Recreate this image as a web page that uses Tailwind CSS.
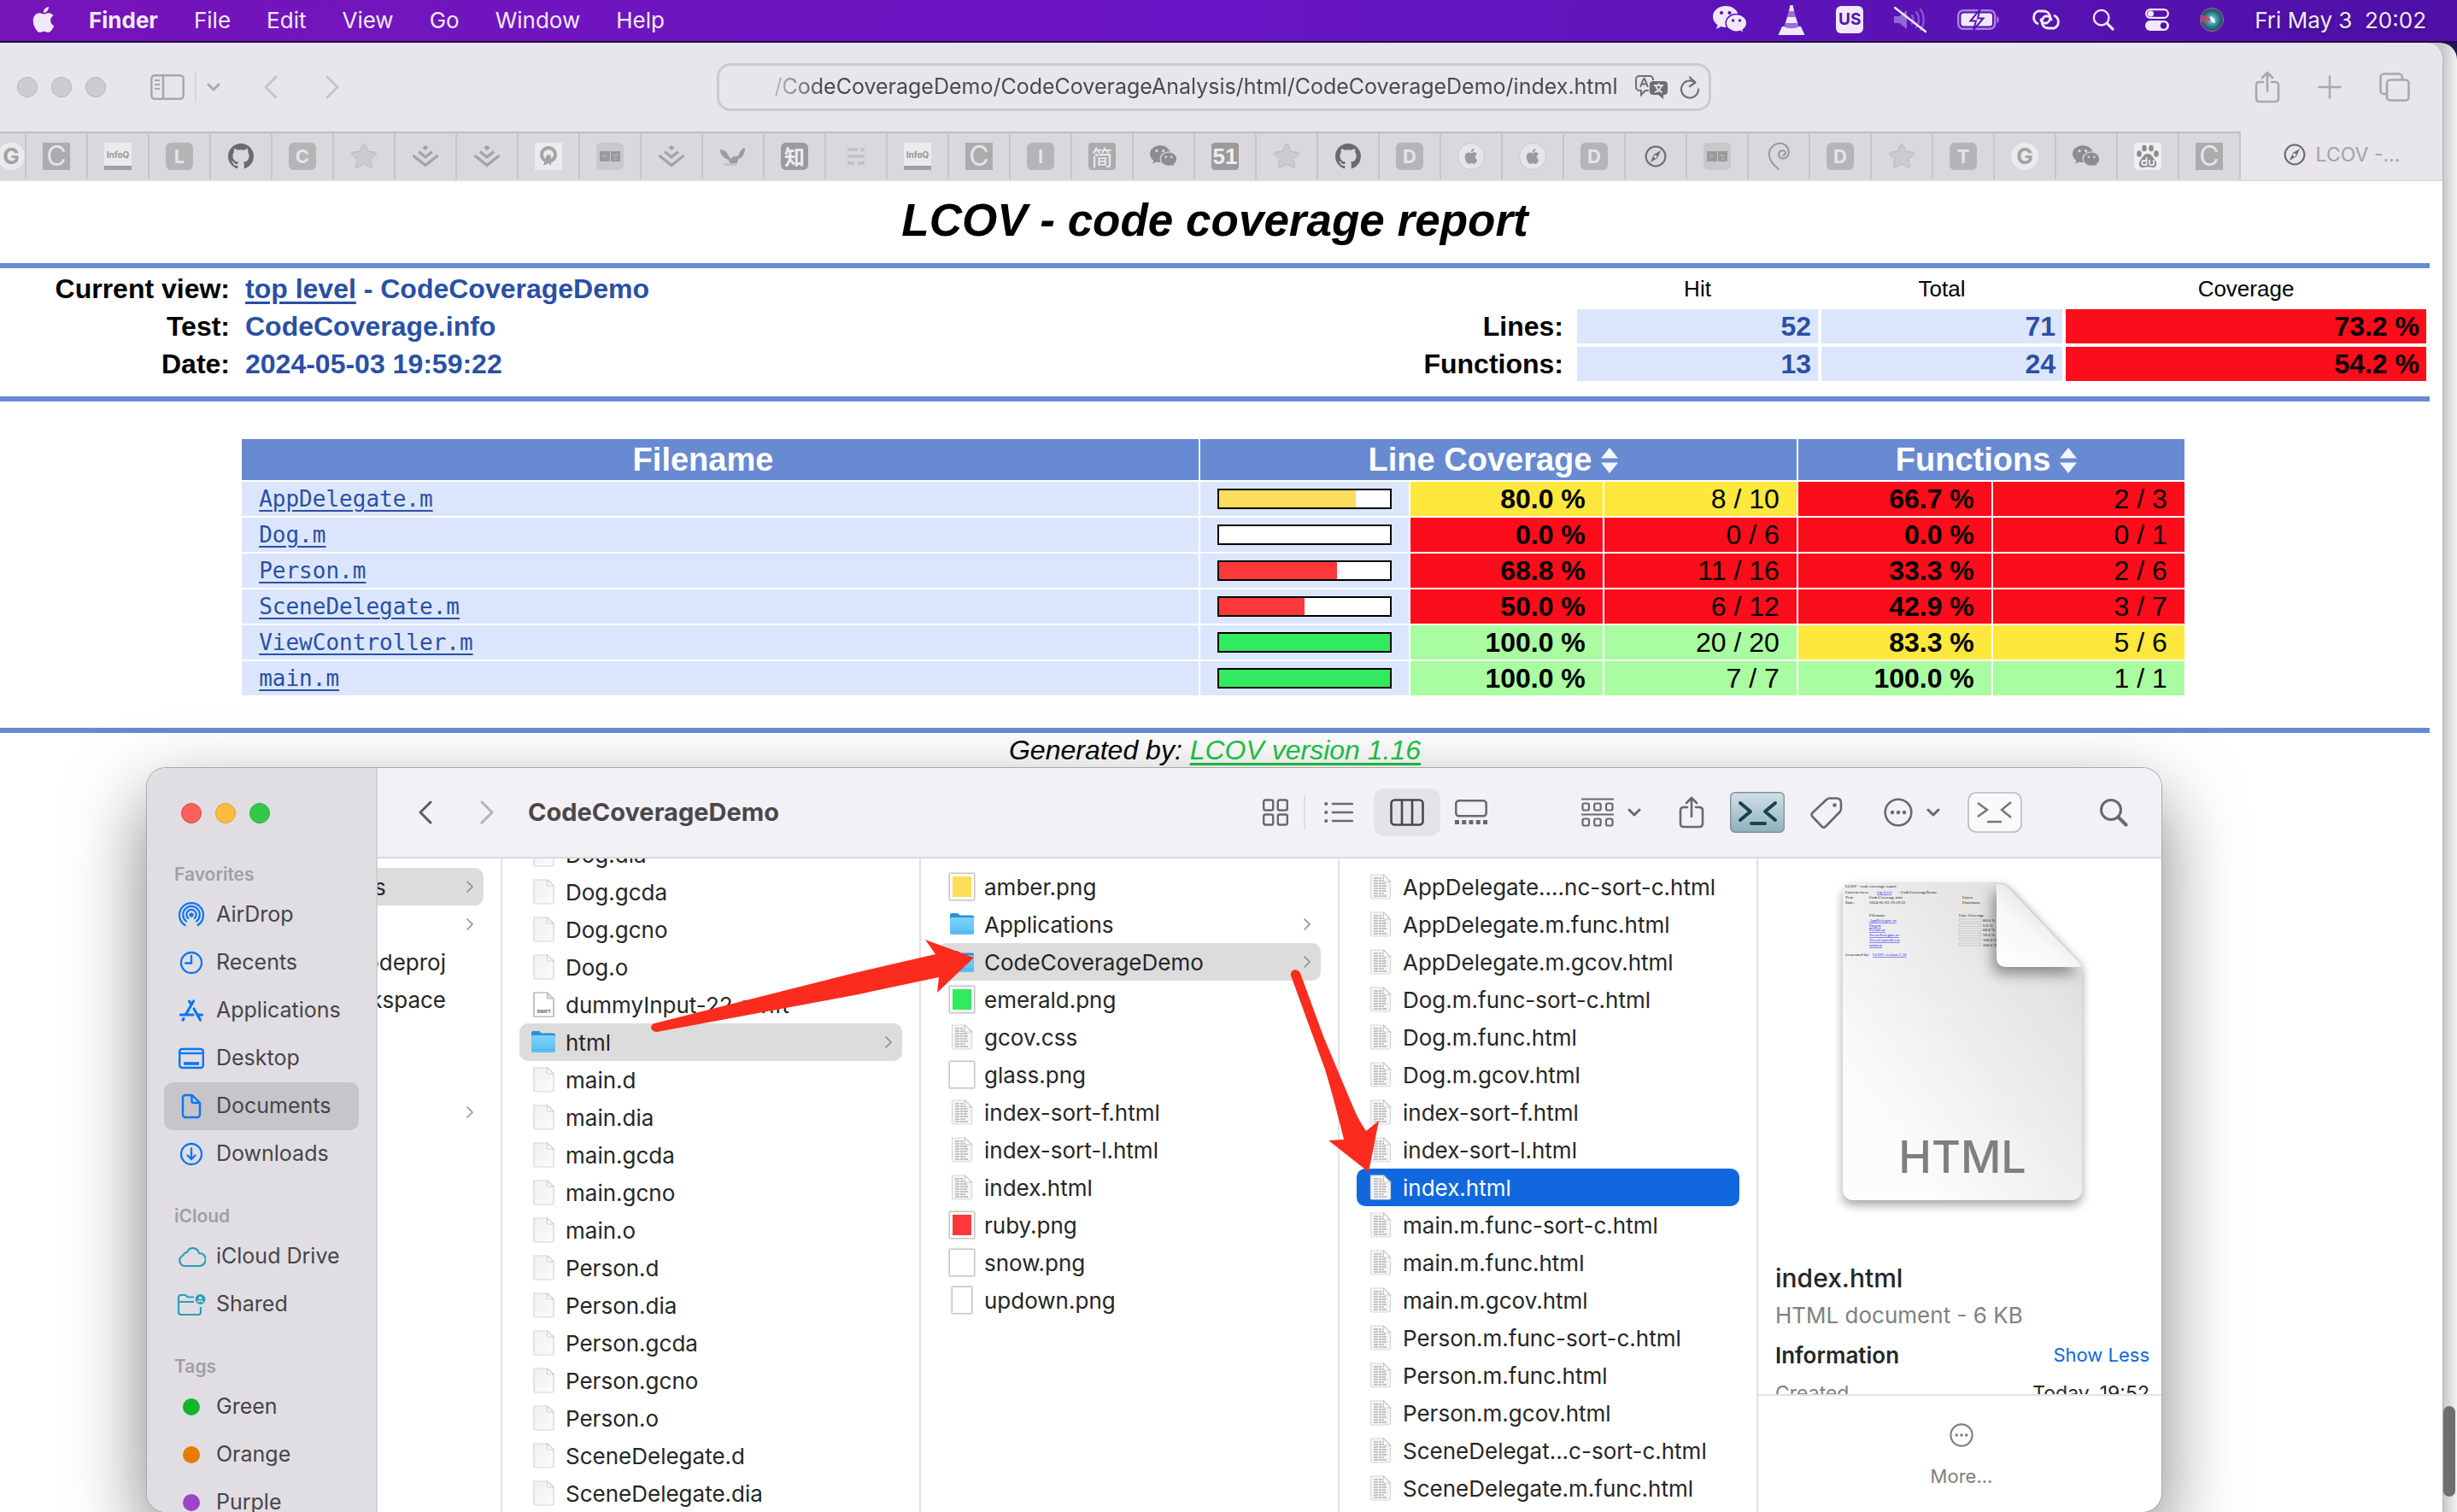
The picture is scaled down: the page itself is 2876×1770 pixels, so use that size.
<!DOCTYPE html>
<html lang="en">
<head>
<meta charset="utf-8">
<title>LCOV - code coverage report</title>
<script src="https://cdn.jsdelivr.net/npm/@tailwindcss/browser@4"></script>
</head>
<body class="relative h-screen overflow-hidden bg-[#24135c] font-['Inter',sans-serif] text-[26px] text-[#262626]">

<!-- Shared symbols -->
<svg class="absolute size-0" aria-hidden="true">
  <defs>
    <linearGradient id="paper" x1="0" y1="0" x2="1" y2="1"><stop offset="0" stop-color="#f0f0f0"/><stop offset="1" stop-color="#fbfbfb"/></linearGradient>
    <linearGradient id="folderFill" x1="0" y1="0" x2="0" y2="1"><stop offset="0" stop-color="#7ad3fb"/><stop offset="1" stop-color="#5bbdf0"/></linearGradient>
    <linearGradient id="sheet" x1="1" y1="0" x2="0" y2="1"><stop offset="0" stop-color="#dadada"/><stop offset=".35" stop-color="#e8e8e8"/><stop offset=".8" stop-color="#fcfcfc"/></linearGradient>
    <linearGradient id="curl" x1="0" y1="1" x2=".6" y2=".3"><stop offset="0" stop-color="#ffffff"/><stop offset=".6" stop-color="#f8f8f8"/><stop offset="1" stop-color="#e6e6e6"/></linearGradient>
    <linearGradient id="steel" x1="0" y1="0" x2="0" y2="1"><stop offset="0" stop-color="#d3e0e6"/><stop offset="1" stop-color="#8fb0bd"/></linearGradient>
    <radialGradient id="siri"><stop offset="0" stop-color="#d8f4fb"/><stop offset=".3" stop-color="#4fb5cc"/><stop offset=".7" stop-color="#27707c"/><stop offset="1" stop-color="#3a3558"/></radialGradient>
  </defs>
  <symbol id="apple" viewBox="0 0 24 24"><path fill="currentColor" d="M12.152 6.896c-.948 0-2.415-1.078-3.96-1.04-2.04.027-3.91 1.183-4.961 3.014-2.117 3.675-.546 9.103 1.519 12.09 1.013 1.454 2.208 3.09 3.792 3.039 1.52-.065 2.09-.987 3.935-.987 1.831 0 2.35.987 3.96.948 1.637-.026 2.676-1.48 3.676-2.948 1.156-1.688 1.636-3.325 1.662-3.415-.039-.013-3.182-1.221-3.22-4.857-.026-3.04 2.48-4.494 2.597-4.559-1.429-2.09-3.623-2.324-4.39-2.376-2-.156-3.675 1.09-4.61 1.09zM15.53 3.83c.843-1.012 1.4-2.427 1.245-3.83-1.207.052-2.662.805-3.532 1.818-.78.896-1.454 2.338-1.273 3.714 1.338.104 2.715-.688 3.559-1.701"/></symbol>
  <symbol id="github" viewBox="0 0 16 16"><path fill="currentColor" d="M8 0C3.58 0 0 3.58 0 8c0 3.54 2.29 6.53 5.47 7.59.4.07.55-.17.55-.38 0-.19-.01-.82-.01-1.49-2.01.37-2.53-.49-2.69-.94-.09-.23-.48-.94-.82-1.13-.28-.15-.68-.52-.01-.53.63-.01 1.08.58 1.23.82.72 1.21 1.87.87 2.33.66.07-.52.28-.87.51-1.07-1.78-.2-3.64-.89-3.64-3.95 0-.87.31-1.59.82-2.15-.08-.2-.36-1.02.08-2.12 0 0 .67-.21 2.2.82.64-.18 1.32-.27 2-.27s1.36.09 2 .27c1.53-1.04 2.2-.82 2.2-.82.44 1.1.16 1.92.08 2.12.51.56.82 1.27.82 2.15 0 3.07-1.87 3.75-3.65 3.95.29.25.54.73.54 1.48 0 1.07-.01 1.93-.01 2.2 0 .21.15.46.55.38A8.01 8.01 0 0 0 16 8c0-4.42-3.58-8-8-8"/></symbol>
  <symbol id="wechat" viewBox="0 0 40 32"><path fill="currentColor" d="M15 0C6.500 0 0 5.500 0 12.500c0 4 2.200 7.500 5.500 9.800L4 27l5.500-3c1.700.6 3.500.9 5.500.9 8.500 0 15-5.500 15-12.400S23.500 0 15 0z"/><circle cx="10" cy="8" r="2.100" fill="var(--cut)"/><circle cx="19.500" cy="8" r="2.100" fill="var(--cut)"/><path fill="currentColor" stroke="var(--cut)" stroke-width="1.600" d="M27.500 9.500c-7 0-12.300 4.600-12.300 10.400s5.300 10.300 12.300 10.300c1.600 0 3-.2 4.300-.7l4.700 2.500-1.200-4.100c2.700-1.900 4.500-4.800 4.500-8 0-5.800-5.300-10.400-12.300-10.400z"/><circle cx="23.500" cy="17" r="1.700" fill="var(--cut)"/><circle cx="31.500" cy="17" r="1.700" fill="var(--cut)"/></symbol>
  <symbol id="star" viewBox="0 0 32 32"><path fill="#cbcacd" stroke="#b9b8bb" stroke-linejoin="round" d="M16 1.500c1 0 1.500.8 1.800 1.600l3 7.400 8 .6c1.800.1 2.300 1.900 1 3l-6.100 5.200 1.900 8c.4 1.700-1.100 2.700-2.600 1.800L16 24.800l-7 4.300c-1.500.9-3-.1-2.600-1.800l1.900-8-6.100-5.200c-1.300-1.100-.8-2.900 1-3l8-.6 3-7.400c.3-.8.8-1.600 1.800-1.600z"/></symbol>
  <symbol id="juejin" viewBox="0 0 32 32"><g fill="none" stroke="#a3a2a5" stroke-width="3.200"><path d="M1.500 15 16 26.500 30.500 15M8 10.500l8 6.500 8-6.500"/></g><path fill="#a3a2a5" d="m16 3 3.700 3-3.700 3-3.700-3z"/></symbol>
  <symbol id="compass" viewBox="0 0 28 28"><circle cx="14" cy="14" r="12.300" fill="none" stroke="#6b6a6d" stroke-width="2.200"/><path fill="#6b6a6d" fill-rule="evenodd" d="m20.500 6.500-4.300 9.700L7.500 21.500l4.200-9.700zM12.600 12.700a2 2 0 1 0 2.800 2.700 2 2 0 0 0-2.800-2.700z"/></symbol>
  <symbol id="pixels" viewBox="0 0 32 32"><rect width="32" height="32" rx="5" fill="#c9c8cb"/><path fill="#9a999c" d="M4 10h12v12H4zM17 10h11v12H17z"/><path fill="#b0afb2" d="M8 14h3v3H8zM20 14h5v2h-5zM21 18h3v2h-3z"/></symbol>
  <symbol id="chev" viewBox="0 0 8 14"><path d="m1 1 6 6-6 6" fill="none" stroke="currentColor" stroke-width="1.500" stroke-linecap="round" stroke-linejoin="round"/></symbol>
  <symbol id="down" viewBox="0 0 16 10"><path d="m2 2 6 6 6-6" fill="none" stroke="currentColor" stroke-width="3" stroke-linecap="round" stroke-linejoin="round"/></symbol>
  <symbol id="share" viewBox="0 0 30 38"><path d="M10 13H5.500A3.500 3.500 0 0 0 2 16.500v16A3.500 3.500 0 0 0 5.500 36h19a3.500 3.500 0 0 0 3.500-3.500v-16a3.500 3.500 0 0 0-3.500-3.500H20M15 24V2.500M9 8l6-6 6 6" fill="none" stroke="currentColor" stroke-width="2.600" stroke-linecap="round" stroke-linejoin="round"/></symbol>
  <symbol id="search" viewBox="0 0 34 34"><circle cx="14" cy="14" r="11.500" fill="none" stroke="currentColor" stroke-width="3"/><path d="m22.500 22.500 9 9" stroke="currentColor" stroke-width="4" stroke-linecap="round"/></symbol>
  <symbol id="dots" viewBox="0 0 34 34"><circle cx="17" cy="17" r="15.300" fill="none" stroke="currentColor" stroke-width="2.600"/><g fill="currentColor"><circle cx="10" cy="17" r="2.200"/><circle cx="17" cy="17" r="2.200"/><circle cx="24" cy="17" r="2.200"/></g></symbol>
  <symbol id="doc" viewBox="0 0 28 30"><path fill="url(#paper)" stroke="#d5d5d5" stroke-width="1.200" d="M3 1h15.500L26 8v19.500a1.500 1.500 0 0 1-1.500 1.500h-20A1.500 1.500 0 0 1 3 27.500z"/><path fill="#fff" stroke="#cfcfcf" stroke-width="1.200" d="M18.500 1v5.500c0 .9.600 1.500 1.500 1.500h6z"/></symbol>
  <symbol id="txt" viewBox="0 0 28 30"><path fill="#f5f5f5" stroke="#d8d8d8" stroke-width="1.200" d="M2.500 1h15l8 8v18.500a1.500 1.500 0 0 1-1.500 1.500H4a1.500 1.500 0 0 1-1.500-1.500z"/><path d="M6 5h10M6 8h11M6 11h14M6 14h15M6 17h14M6 20h15M6 23h12M6 26h15" fill="none" stroke="#b4b4b4" stroke-width="1.700" stroke-dasharray="5 1 3 .5 6 1"/><path fill="#fff" stroke="#c9c9c9" stroke-width="1.200" d="M17.500 1v6.500c0 .9.600 1.500 1.500 1.500h6.500z"/></symbol>
  <symbol id="folder" viewBox="0 0 28 28"><path fill="#2e8fce" d="M0 3a2 2 0 0 1 2-2h7l3 2.500h14a2 2 0 0 1 2 2V12H0z"/><path fill="url(#folderFill)" d="M0 8a2 2 0 0 1 2-2h24a2 2 0 0 1 2 2v16a2 2 0 0 1-2 2H2a2 2 0 0 1-2-2z"/><path stroke="#48aee6" d="M0 22.500h28"/></symbol>
  <symbol id="sort" viewBox="0 0 20 30"><path fill="#f3f6fd" d="M10 0l10 12.500H0zM10 30 0 17.500h20z"/></symbol>
</svg>

<!-- Menu bar -->
<header class="flex h-[50px] items-center justify-between border-b-2 border-[#1d0849] bg-linear-to-r from-[#7514b9] via-[#6915c5] to-[#4e10a8] pr-9 pb-0.5 pl-9 text-[#f1e9f9] [text-shadow:0_3px_5px_rgb(0_0_0/.3)]">
  <nav class="flex items-center gap-[42px]">
    <button aria-label="Apple menu"><svg class="h-8 w-[30px]"><use href="#apple"/></svg></button>
    <button class="-ml-1 font-bold">Finder</button>
    <button>File</button><button>Edit</button><button>View</button><button>Go</button><button>Window</button><button>Help</button>
  </nav>
  <div class="flex items-center gap-9 [--cut:#5c13bb]">
    <svg class="h-8 w-10"><use href="#wechat"/></svg>
    <svg class="h-9 w-8" viewBox="0 0 32 36"><path fill="#f1e9f9" d="M14.500 1h3l1.600 7h-6.200zM11 15h10l2.500 8h-15zM5 26h22l4.500 10H.5z"/><path fill="#9a6fd6" d="M12.800 8h6.400l2 7H10.800zM8.500 22h15l1 4c-3 3-14 3-17 0z"/></svg>
    <span class="grid size-8 place-items-center rounded-md bg-[#f1e9f9] text-[19px] font-bold text-[#5a12b4] [text-shadow:none]">US</span>
    <svg class="h-8 w-[38px]" viewBox="0 0 38 32" fill="none"><path fill="#9266d2" d="M0 12h6l9-7v22l-9-7H0z"/><path stroke="#8654cc" stroke-width="2.500" stroke-linecap="round" d="M21 11c2 3 2 7 0 10M26 7c4 5 4 13 0 18M31 4c5 7 5 17 0 24"/><path stroke="#f1e9f9" stroke-width="2.500" stroke-linecap="round" d="M1 2l36 28"/></svg>
    <svg class="h-6 w-[50px]" viewBox="0 0 50 24"><rect x="1.200" y="1.200" width="43" height="21.600" rx="6" fill="none" stroke="#a884dc" stroke-width="2.400"/><path fill="#a884dc" d="M46.500 8c3 1 3 7 0 8z"/><rect x="4.500" y="4.500" width="36.500" height="15" rx="3" fill="#f1e9f9"/><path fill="#f1e9f9" stroke="#5a12b4" stroke-width="2" d="M26.500 0 15.500 13.500h6.500L19 24l11.500-13.500H24z"/></svg>
    <svg class="h-6 w-9" viewBox="0 0 36 24" fill="none" stroke="#f1e9f9" stroke-width="2.800" stroke-linecap="round"><path d="M8 16.500A8 8 0 0 1 8.500 2H15a7.500 7.500 0 0 1 4 14H16a4 4 0 0 1-4-4"/><path d="M28 7.500A8 8 0 0 1 27.500 22H20a7.500 7.500 0 0 1-3-14h3a4 4 0 0 1 4 4"/></svg>
    <svg class="size-[26px]"><use href="#search"/></svg>
    <svg class="h-[26px] w-7" viewBox="0 0 28 26"><rect x="1.200" y="1.200" width="25.600" height="9.600" rx="4.800" fill="none" stroke="#f1e9f9" stroke-width="2.200"/><circle cx="6.500" cy="6" r="3.500" fill="#f1e9f9"/><rect y="14" width="28" height="12" rx="6" fill="#f1e9f9"/><circle cx="21.500" cy="20" r="3.700" fill="#4e10a8"/></svg>
    <svg class="size-7" viewBox="0 0 28 28"><circle cx="14" cy="14" r="13.500" fill="url(#siri)" stroke="#8a7fa8"/><path fill="#d43c6b" opacity=".8" d="M2 9c5 0 9 2 11 5-3 4-8 5-12 1z"/><path fill="#fff" opacity=".9" d="M12 10c4 1 6 4 6 8-4 0-6-3-6-8z"/></svg>
    <time class="whitespace-pre">Fri May 3  20:02</time>
  </div>
</header>

<!-- Window behind the browser, seen along the right edge -->
<div class="absolute top-[50px] right-0 bottom-0 w-16 rounded-tr-[20px] bg-linear-to-r from-[#c9c9c9] from-75% to-[#f3f3f3]">
  <div class="absolute right-0.5 bottom-[18px] h-[106px] w-3.5 rounded-full bg-[#6f6f6f]"></div>
</div>

<!-- Browser window -->
<main class="absolute top-[50px] right-4 bottom-0 left-0 overflow-hidden rounded-tr-[20px] border-r border-[#b5b5b5] bg-white">
  <div class="flex h-[104px] items-center justify-between bg-[#e8e6eb] pr-[38px] pl-5 text-[#a9a8ac]">
    <div class="flex flex-1 items-center">
      <div class="flex gap-4"><i class="size-6 rounded-full border border-[#b5b4b9] bg-[#cdccd1]"></i><i class="size-6 rounded-full border border-[#b5b4b9] bg-[#cdccd1]"></i><i class="size-6 rounded-full border border-[#b5b4b9] bg-[#cdccd1]"></i></div>
      <button class="ml-[52px]" aria-label="Sidebar"><svg class="h-[30px] w-10" viewBox="0 0 40 30" fill="none" stroke="currentColor" stroke-width="2.500"><rect x="1.300" y="1.300" width="37.400" height="27.400" rx="4"/><path d="M15 1v28"/><path stroke-width="2" d="M5 7h6M5 12h6M5 17h6"/></svg></button>
      <span class="ml-3 h-9 w-0.5 bg-[#d6d5da]"></span>
      <button class="ml-3" aria-label="Sidebar options"><svg class="h-2.5 w-4"><use href="#down"/></svg></button>
      <button class="ml-[51px] text-[#c6c5ca]" aria-label="Back"><svg class="h-7 w-4 rotate-180"><use href="#chev"/></svg></button>
      <button class="ml-14 text-[#c6c5ca]" aria-label="Forward"><svg class="h-7 w-4"><use href="#chev"/></svg></button>
    </div>
    <div class="flex h-14 w-[1164px] items-center rounded-2xl border-[3px] border-[#cbcace] pr-2.5 pl-[42px] text-[#6f6e72]">
      <input aria-label="Address" class="min-w-0 flex-1 bg-transparent text-right text-[25px] text-[#4b4a4d] [mask-image:linear-gradient(to_right,transparent,black_80px)]" value="/CodeCoverageDemo/CodeCoverageAnalysis/html/CodeCoverageDemo/index.html">
      <svg class="ml-5 h-7 w-[38px]" viewBox="0 0 38 28"><path fill="none" stroke="currentColor" stroke-width="2" d="M16 18h-4l-5 5v-5H5a4 4 0 0 1-4-4V5a4 4 0 0 1 4-4h12a4 4 0 0 1 4 4v1"/><path fill="none" stroke="currentColor" stroke-width="2" d="m6 14 4-10h1l4 10M8 10.500h5"/><path fill="currentColor" d="M21 7h13a4 4 0 0 1 4 4v8a4 4 0 0 1-4 4h-1v5l-6-5h-6a4 4 0 0 1-4-4v-8a4 4 0 0 1 4-4z"/><path fill="none" stroke="#e8e6eb" stroke-width="1.800" d="M22 12h11M27.500 9.500V12M31 12c-1 4-4 7-8 8M24 12c1 4 4 7 8 8"/></svg>
      <svg class="ml-3.5 h-[27px] w-6" viewBox="0 0 24 27" fill="none" stroke="currentColor" stroke-width="2.200" stroke-linecap="round" stroke-linejoin="round"><path d="M18 7.500A10 10 0 1 0 22 15.500M12 1.500l6.500 6-6.500 4.500"/></svg>
    </div>
    <div class="flex flex-1 items-center justify-end">
      <button aria-label="Share"><svg class="h-[38px] w-[30px]"><use href="#share"/></svg></button>
      <button class="ml-11" aria-label="New tab"><svg class="size-7" viewBox="0 0 28 28" stroke="currentColor" stroke-width="2.500" stroke-linecap="round"><path d="M14 1.500v25M1.500 14h25"/></svg></button>
      <button class="ml-11" aria-label="Tab overview"><svg class="h-[34px] w-9" viewBox="0 0 36 34" fill="none" stroke="currentColor" stroke-width="2.600"><rect x="9" y="8.500" width="25.500" height="24" rx="4"/><path d="M9 25H5.500a4 4 0 0 1-4-4V5.500a4 4 0 0 1 4-4H23a4 4 0 0 1 4 4v3"/></svg></button>
    </div>
  </div>

  <!-- Tab strip -->
  <div class="flex h-[58px] border-b-2 border-[#dcdbdf] bg-[#dad8dd] [--cut:#dad8dd] [&>button]:grid [&>button]:w-[72px] [&>button]:shrink-0 [&>button]:place-items-center [&>button]:border-t-2 [&>button]:border-r-2 [&>button]:border-t-[#bcbbc0] [&>button]:border-r-[#c6c5ca] [&_span]:grid [&_span]:size-8 [&_span]:place-items-center [&_span]:leading-none [&_svg]:size-8">
    <div class="flex w-[31px] items-center justify-end overflow-hidden border-t-2 border-r-2 border-t-[#bcbbc0] border-r-[#c6c5ca]"><span class="shrink-0 rounded-full bg-[#ebeaed] text-[26px] font-bold text-[#a3a2a5]">G</span></div>
    <button><span class="bg-[#acabad] text-[32px] text-[#e6e5e8]">C</span></button>
    <button><span class="border-b-[5px] border-[#a09fa2] bg-[#ebeaed] text-[10px] font-bold text-[#98979a]">InfoQ</span></button>
    <button><span class="rounded-md bg-[#b5b4b6] text-[22px] font-bold text-[#e6e5e8]">L</span></button>
    <button class="text-[#6b6a6d]" aria-label="GitHub"><svg class="p-px"><use href="#github"/></svg></button>
    <button><span class="rounded-md bg-[#b5b4b6] text-[22px] font-bold text-[#e6e5e8]">C</span></button>
    <button aria-label="Tab"><svg><use href="#star"/></svg></button>
    <button aria-label="Tab"><svg><use href="#juejin"/></svg></button>
    <button aria-label="Tab"><svg><use href="#juejin"/></svg></button>
    <button aria-label="Tab"><svg viewBox="0 0 32 32"><path fill="#ebeaed" d="M0 0h32v32H0z"/><circle cx="16" cy="14" r="8" fill="none" stroke="#a3a2a5" stroke-width="4"/><path fill="#a3a2a5" d="M13 17c0-4 6-4 6 0v10l-3-3-6 3z"/></svg></button>
    <button aria-label="Tab"><svg><use href="#pixels"/></svg></button>
    <button aria-label="Tab"><svg><use href="#juejin"/></svg></button>
    <button aria-label="Tab"><svg viewBox="0 0 32 32"><path fill="#8d8c8f" d="M1 8c4 0 8 2 10 8l2 3 4-3c3 0 5 0 6-2 1-4 3-7 7-8 0 6-2 12-8 13l-1 5c-5 3-9 2-10-4C5 18 1 14 1 8z" opacity=".8"/><path fill="#c5c4c7" d="M6 24h14v3H6z"/></svg></button>
    <button><span class="rounded-md bg-[#9b9a9d] font-['Noto_Sans_CJK_SC',sans-serif] text-[24px] font-bold text-[#efeef1]">知</span></button>
    <button aria-label="Tab"><svg viewBox="0 0 32 32" fill="#c2c1c4"><path d="M6 6h12v4H6zM21 6h5v4h-5zM6 14h20v4H6zM6 22h8v4H6zM18 22h8v4h-8z"/></svg></button>
    <button><span class="border-b-[5px] border-[#a09fa2] bg-[#ebeaed] text-[10px] font-bold text-[#98979a]">InfoQ</span></button>
    <button><span class="bg-[#acabad] text-[32px] text-[#e6e5e8]">C</span></button>
    <button><span class="rounded-md bg-[#b5b4b6] text-[22px] font-bold text-[#e6e5e8]">I</span></button>
    <button><span class="rounded-sm bg-[#acabad] font-['Noto_Sans_CJK_SC',sans-serif] text-[25px] text-[#efeef1]">简</span></button>
    <button class="text-[#8d8c8f]" aria-label="WeChat"><svg><use href="#wechat"/></svg></button>
    <button><span class="rounded-sm bg-[#9b9a9d] font-['Liberation_Sans',sans-serif] text-[26px] font-bold text-[#efeef1]">51</span></button>
    <button aria-label="Tab"><svg><use href="#star"/></svg></button>
    <button class="text-[#6b6a6d]" aria-label="GitHub"><svg class="p-px"><use href="#github"/></svg></button>
    <button><span class="rounded-md bg-[#b5b4b6] text-[22px] font-bold text-[#e6e5e8]">D</span></button>
    <button class="text-[#9b9a9d]" aria-label="Apple"><span class="rounded-full border border-[#c9c8cb] bg-[#e6e5e8] [&>svg]:size-[18px]"><svg><use href="#apple"/></svg></span></button>
    <button class="text-[#9b9a9d]" aria-label="Apple"><span class="rounded-full border border-[#c9c8cb] bg-[#e6e5e8] [&>svg]:size-[18px]"><svg><use href="#apple"/></svg></span></button>
    <button><span class="rounded-md bg-[#b5b4b6] text-[22px] font-bold text-[#e6e5e8]">D</span></button>
    <button aria-label="Tab"><svg class="p-[3px]"><use href="#compass"/></svg></button>
    <button aria-label="Tab"><svg><use href="#pixels"/></svg></button>
    <button aria-label="Tab"><svg viewBox="0 0 32 32" fill="none" stroke="#98979a" stroke-width="2" stroke-linecap="round"><path d="M16 31C8 25 4 18 5 11 7 3 14 0 20 1c7 2 9 9 7 14-3 5-10 5-11-1 0-4 4-6 7-4 2 2 0 5-2 5"/></svg></button>
    <button><span class="rounded-md bg-[#b5b4b6] text-[22px] font-bold text-[#e6e5e8]">D</span></button>
    <button aria-label="Tab"><svg><use href="#star"/></svg></button>
    <button><span class="rounded-md bg-[#b5b4b6] text-[22px] font-bold text-[#e6e5e8]">T</span></button>
    <button><span class="rounded-full bg-[#ebeaed] text-[26px] font-bold text-[#a3a2a5]">G</span></button>
    <button class="text-[#8d8c8f]" aria-label="WeChat"><svg><use href="#wechat"/></svg></button>
    <button aria-label="Baidu"><svg viewBox="0 0 32 32"><rect width="32" height="32" rx="5" fill="#efeef1"/><g fill="#8d8c8f"><ellipse cx="6" cy="13" rx="2.800" ry="3.700"/><ellipse cx="12" cy="6.500" rx="2.800" ry="3.800"/><ellipse cx="20" cy="6.500" rx="2.800" ry="3.800"/><ellipse cx="26" cy="13" rx="2.800" ry="3.700"/><path d="M16 13c5 0 6 5 9 8 3 5 0 9-4 8-3-1-7-1-10 0-4 1-7-3-4-8 3-3 4-8 9-8z"/></g><path fill="none" stroke="#efeef1" stroke-width="1.800" d="M14.500 17v9h-3c-3 0-3-5 0-5h3M18 20v4c0 3 4 3 5 1v-5 6"/></svg></button>
    <button><span class="bg-[#acabad] text-[32px] text-[#e6e5e8]">C</span></button>
    <div class="flex flex-1 items-center justify-center gap-3 bg-[#e8e6eb] pb-0.5 text-[23px] text-[#a3a2a5] [&>svg]:size-[26px]"><svg><use href="#compass"/></svg>LCOV -...</div>
  </div>

  <!-- Coverage report -->
  <article class="mr-[15px] font-['Liberation_Sans',Arial,sans-serif] text-[32px] leading-10 text-black">
    <h1 class="flex h-24 items-center justify-center pb-1 text-[53px] font-bold italic">LCOV - code coverage report</h1>
    <div class="flex items-start justify-between border-y-[6px] border-[#688ad2] pb-3.5 font-bold">
      <table class="border-separate border-spacing-1 text-left text-[#2a50a5] [&_td]:h-10 [&_td]:p-0 [&_td]:pl-0.5 [&_th]:w-[277px] [&_th]:p-0 [&_th]:pr-3 [&_th]:text-right [&_th]:text-black">
        <tr><th scope="row">Current view:</th><td><a href="#" class="underline underline-offset-4">top level</a> - CodeCoverageDemo</td></tr>
        <tr><th scope="row">Test:</th><td>CodeCoverage.info</td></tr>
        <tr><th scope="row">Date:</th><td>2024-05-03 19:59:22</td></tr>
      </table>
      <table class="border-separate border-spacing-1 text-right [&_td]:h-10 [&_td]:bg-[#dbe6fd] [&_td]:p-0 [&_td]:pr-2 [&_td]:text-[#2a50a5] [&_th]:h-10 [&_th]:p-0">
        <tr class="text-center text-[26px] [&>th]:font-normal"><td class="bg-transparent!"></td><th class="w-[282px]">Hit</th><th class="w-[282px]">Total</th><th class="w-[422px]">Coverage</th></tr>
        <tr><th scope="row" class="pr-3!">Lines:</th><td>52</td><td>71</td><td class="bg-[#fc0d1b]! text-black!">73.2 %</td></tr>
        <tr><th scope="row" class="pr-3!">Functions:</th><td>13</td><td>24</td><td class="bg-[#fc0d1b]! text-black!">54.2 %</td></tr>
      </table>
    </div>

    <div class="pt-[42px] pr-1">
    <table class="mx-auto w-[80.2%] table-fixed border-separate border-spacing-0.5 text-right [&_tbody_td]:h-10 [&_tbody_td]:p-0 [&_tbody_td]:pr-5 [&_tbody_td]:leading-9 [&_tbody_tr>td:first-child]:bg-[#dbe6fd] [&_tbody_tr>td:first-child]:pl-5 [&_tbody_tr>td:first-child]:text-left [&_tbody_tr>td:nth-child(2)]:bg-[#dbe6fd] [&_tbody_tr>td:nth-child(2)]:pl-5 [&_tbody_tr>td:nth-child(3)]:font-bold [&_tbody_tr>td:nth-child(5)]:font-bold [&_thead_th]:h-12 [&_thead_th]:bg-[#688ad2] [&_thead_th]:p-0 [&_thead_th]:pr-3 [&_thead_th]:text-center [&_thead_th]:text-[38px] [&_thead_th]:text-white [&_a]:block [&_a]:font-['DejaVu_Sans_Mono',monospace] [&_a]:text-[26px] [&_a]:text-[#2a50a5] [&_a]:underline [&_a]:underline-offset-4">
      <colgroup><col><col class="w-[244px]"><col class="w-[225px]"><col class="w-[225px]"><col class="w-[226px]"><col class="w-[224px]"></colgroup>
      <thead><tr><th class="pr-10!">Filename</th><th colspan="3">Line Coverage <svg class="inline h-[30px] w-5 align-[-3px]"><use href="#sort"/></svg></th><th colspan="2">Functions <svg class="inline h-[30px] w-5 align-[-3px]"><use href="#sort"/></svg></th></tr></thead>
      <tbody>
        <tr><td><a href="#">AppDelegate.m</a></td><td><div class="h-6 w-[204px] border-2 border-black bg-white"><div class="h-full bg-[#fddd5c]" style="width:80%"></div></div></td><td class="bg-[#fee83d]">80.0 %</td><td class="bg-[#fee83d]">8 / 10</td><td class="bg-[#fc0d1b]">66.7 %</td><td class="bg-[#fc0d1b]">2 / 3</td></tr>
        <tr><td><a href="#">Dog.m</a></td><td><div class="h-6 w-[204px] border-2 border-black bg-white"></div></td><td class="bg-[#fc0d1b]">0.0 %</td><td class="bg-[#fc0d1b]">0 / 6</td><td class="bg-[#fc0d1b]">0.0 %</td><td class="bg-[#fc0d1b]">0 / 1</td></tr>
        <tr><td><a href="#">Person.m</a></td><td><div class="h-6 w-[204px] border-2 border-black bg-white"><div class="h-full bg-[#fd383a]" style="width:69%"></div></div></td><td class="bg-[#fc0d1b]">68.8 %</td><td class="bg-[#fc0d1b]">11 / 16</td><td class="bg-[#fc0d1b]">33.3 %</td><td class="bg-[#fc0d1b]">2 / 6</td></tr>
        <tr><td><a href="#">SceneDelegate.m</a></td><td><div class="h-6 w-[204px] border-2 border-black bg-white"><div class="h-full bg-[#fd383a]" style="width:50%"></div></div></td><td class="bg-[#fc0d1b]">50.0 %</td><td class="bg-[#fc0d1b]">6 / 12</td><td class="bg-[#fc0d1b]">42.9 %</td><td class="bg-[#fc0d1b]">3 / 7</td></tr>
        <tr><td><a href="#">ViewController.m</a></td><td><div class="h-6 w-[204px] border-2 border-black bg-white"><div class="h-full bg-[#31ea5f]" style="width:100%"></div></div></td><td class="bg-[#aafca0]">100.0 %</td><td class="bg-[#aafca0]">20 / 20</td><td class="bg-[#fee83d]">83.3 %</td><td class="bg-[#fee83d]">5 / 6</td></tr>
        <tr><td><a href="#">main.m</a></td><td><div class="h-6 w-[204px] border-2 border-black bg-white"><div class="h-full bg-[#31ea5f]" style="width:100%"></div></div></td><td class="bg-[#aafca0]">100.0 %</td><td class="bg-[#aafca0]">7 / 7</td><td class="bg-[#aafca0]">100.0 %</td><td class="bg-[#aafca0]">1 / 1</td></tr>
      </tbody>
    </table>
    </div>
    <p class="mt-9 border-t-[6px] border-[#688ad2] text-center italic">Generated by: <a href="#" class="text-[#1fc546] underline underline-offset-4">LCOV version 1.16</a></p>
  </article>
</main>

<!-- Finder window -->
<section class="absolute top-[899px] right-[346px] bottom-0 left-[172px] flex overflow-hidden rounded-[22px] bg-white shadow-[0_0_0_1px_#a9a9ab,0_36px_90px_rgb(0_0_0/.5)]">
  <aside class="w-[270px] shrink-0 overflow-hidden border-r-2 border-[#d2d0d5] bg-[#e0dee3] px-5 text-[25px] text-[#464548] [&_h2]:mt-[26px] [&_h2]:h-[38px] [&_h2]:pl-3 [&_h2]:text-[21px] [&_h2]:leading-[38px] [&_h2]:font-semibold [&_h2]:text-[#a09fa3] [&_li]:flex [&_li]:h-14 [&_li]:items-center [&_li]:gap-3 [&_li]:rounded-[10px] [&_li]:pl-[15px] [&_li>svg]:h-8 [&_li>svg]:w-[34px] [&_li>svg]:shrink-0 [&_li]:whitespace-nowrap [&_i]:mx-[7px] [&_i]:size-5 [&_i]:rounded-full">
    <div class="flex h-[106px] items-center gap-4 pl-5"><b class="size-6 rounded-full border border-[#e2463f] bg-[#fc605c]"></b><b class="size-6 rounded-full border border-[#dfa032] bg-[#fdbc40]"></b><b class="size-6 rounded-full border border-[#2aac3c] bg-[#34c84a]"></b></div>
    <h2 class="mt-0!">Favorites</h2>
    <ul class="[&_svg]:text-[#0a76f8]">
      <li><svg viewBox="0 0 34 32" fill="none" stroke="currentColor" stroke-width="2.200" stroke-linecap="round"><path d="M9.500 28A14 14 0 1 1 24.500 28M11 23.500a9.800 9.800 0 1 1 12 0M13.300 20a5.700 5.700 0 1 1 7.400 0"/><circle cx="17" cy="16" r="1.500" fill="currentColor"/></svg>AirDrop</li>
      <li><svg viewBox="0 0 34 32" fill="none" stroke="currentColor" stroke-width="2.300" stroke-linecap="round"><circle cx="17" cy="16" r="12"/><path d="M17 8v8.500h-7"/></svg>Recents</li>
      <li><svg viewBox="0 0 34 32" fill="none" stroke="currentColor" stroke-width="3.200" stroke-linecap="round"><path d="M19.500 5 10.500 20.500M14.500 5l2.500 4M20 14l7.500 13M4.500 21H19M25 21h4.500M8 25.500 7 27"/></svg>Applications</li>
      <li><svg viewBox="0 0 34 32" fill="none" stroke="currentColor" stroke-width="2.400"><rect x="3.200" y="5" width="27.600" height="22" rx="3"/><path d="M3 10h28"/><path stroke-width="3.600" d="M8 22h18"/></svg>Desktop</li>
      <li class="bg-[#c7c5ca]"><svg viewBox="0 0 34 32" fill="none" stroke="currentColor" stroke-width="2.400" stroke-linejoin="round"><path d="M10 3h8l9 9v14a3 3 0 0 1-3 3H10a3 3 0 0 1-3-3V6a3 3 0 0 1 3-3zM17.500 3v7a2 2 0 0 0 2 2H27"/></svg>Documents</li>
      <li><svg viewBox="0 0 34 32" fill="none" stroke="currentColor" stroke-width="2.300" stroke-linecap="round"><circle cx="17" cy="16" r="12"/><path d="M17 9.500v12M12.500 17.500l4.500 4.500 4.500-4.500"/></svg>Downloads</li>
    </ul>
    <h2>iCloud</h2>
    <ul class="[&_svg]:text-[#2a9fba]">
      <li><svg viewBox="0 0 34 32" fill="none" stroke="currentColor" stroke-width="2.200"><path d="M9 27a6.500 6.500 0 0 1-1.500-12.500A5 5 0 0 1 12 11c2.500-7 12-6.500 14 1a7.500 7.500 0 0 1 .5 15z"/></svg>iCloud Drive</li>
      <li><svg viewBox="0 0 34 32" fill="none" stroke="currentColor" stroke-width="2.200"><path d="M28 19v6a3 3 0 0 1-3 3H5a3 3 0 0 1-3-3V8a3 3 0 0 1 3-3h5l3 2.500h7M2 13h18"/><circle cx="27.500" cy="10" r="6" fill="currentColor" stroke="none"/><circle cx="27.500" cy="8.500" r="1.800" fill="#e0dee3" stroke="none"/><path stroke="#e0dee3" stroke-width="1.600" d="M24 13.500c1-2 6-2 7 0"/></svg>Shared</li>
    </ul>
    <h2>Tags</h2>
    <ul>
      <li><i class="bg-[#12b52d]"></i>Green</li>
      <li><i class="bg-[#e87b00]"></i>Orange</li>
      <li><i class="bg-[#9b45c9]"></i>Purple</li>
    </ul>
  </aside>

  <div class="flex min-w-0 flex-1 flex-col">
    <div class="flex h-[106px] shrink-0 items-center border-b-2 border-[#dad8dd] bg-[#f3f1f6] pr-[39px] pl-[47px] text-[#69686c] [&_button]:shrink-0">
      <button class="text-[#5d5c60]" aria-label="Back"><svg class="h-7 w-[18px] rotate-180"><use href="#chev"/></svg></button>
      <button class="ml-[54px] text-[#b3b2b6]" aria-label="Forward"><svg class="h-7 w-[18px]"><use href="#chev"/></svg></button>
      <h2 class="ml-[39px] flex-1 text-[29px] font-bold text-[#49484b]">CodeCoverageDemo</h2>
      <button aria-label="Icon view"><svg class="h-8 w-[30px]" viewBox="0 0 30 32" fill="none" stroke="currentColor" stroke-width="2.400"><rect x="1.200" y="1.500" width="11" height="12" rx="2"/><rect x="17.800" y="1.500" width="11" height="12" rx="2"/><rect x="1.200" y="18.500" width="11" height="12" rx="2"/><rect x="17.800" y="18.500" width="11" height="12" rx="2"/></svg></button>
      <span class="ml-[18px] h-10 w-0.5 bg-[#e0dee3]"></span>
      <button class="ml-[22px]" aria-label="List view"><svg class="h-[26px] w-[34px]" viewBox="0 0 34 26" stroke="currentColor" stroke-width="2.500" stroke-linecap="round"><path d="M10 3h23M10 13h23M10 23h23"/><path stroke-width="4" d="M2.200 3h.1M2.200 13h.1M2.200 23h.1"/></svg></button>
      <button class="ml-6 grid h-14 w-[78px] place-items-center rounded-xl bg-[#e5e3e8] text-[#49484b]" aria-label="Column view"><svg class="h-8 w-10" viewBox="0 0 40 32" fill="none" stroke="currentColor" stroke-width="2.600"><rect x="1.500" y="1.500" width="37" height="29" rx="4"/><path d="M14 1.500v29M26 1.500v29"/></svg></button>
      <button class="ml-[17px]" aria-label="Gallery view"><svg class="h-[30px] w-[38px]" viewBox="0 0 38 30" fill="none" stroke="currentColor" stroke-width="2.500"><rect x="1.300" y="1.300" width="35.400" height="18" rx="3.500"/><path stroke-width="5" stroke-dasharray="5 3.250" d="M0 26.500h38"/></svg></button>
      <button class="ml-[110px] flex items-center gap-4" aria-label="Group"><svg class="h-[34px] w-[38px]" viewBox="0 0 38 34" fill="none" stroke="currentColor" stroke-width="2.200"><path d="M0 1.500h38M0 19.500h38"/><rect x="1.500" y="6.500" width="7.500" height="8" rx="2"/><rect x="15.200" y="6.500" width="7.500" height="8" rx="2"/><rect x="29" y="6.500" width="7.500" height="8" rx="2"/><rect x="1.500" y="24.500" width="7.500" height="8" rx="2"/><rect x="15.200" y="24.500" width="7.500" height="8" rx="2"/><rect x="29" y="24.500" width="7.500" height="8" rx="2"/></svg><svg class="h-2.5 w-4"><use href="#down"/></svg></button>
      <button class="ml-11" aria-label="Share"><svg class="h-[38px] w-[30px]"><use href="#share"/></svg></button>
      <button class="ml-[30px]" aria-label="Open terminal"><svg class="h-12 w-16" viewBox="0 0 64 48"><rect x=".7" y=".7" width="62.600" height="46.600" rx="5" fill="url(#steel)" stroke="#7796a3" stroke-width="1.400"/><path d="m12 13 12 10-12 10M53 13 41 23l12 10M25 37h16" fill="none" stroke="#17434f" stroke-width="4" stroke-linecap="round" stroke-linejoin="round"/></svg></button>
      <button class="ml-[30px]" aria-label="Tags"><svg class="size-[38px]" viewBox="0 0 38 38" fill="none" stroke="currentColor" stroke-width="2.600" stroke-linejoin="round"><path d="M22.500 2.500h8c3.500 0 5.500 2 5.500 5.500v7c0 1.500-.5 2.500-1.500 3.500L18 35.500c-1.500 1.500-3 1.500-4.500 0L2.500 24c-1.300-1.500-1.300-3 0-4.500L19 4c1-1 2-1.500 3.500-1.500z"/><circle cx="28.500" cy="10.500" r="2.300" fill="currentColor" stroke="none"/></svg></button>
      <button class="ml-12 flex items-center gap-4" aria-label="Actions"><svg class="size-[34px]"><use href="#dots"/></svg><svg class="h-2.5 w-4"><use href="#down"/></svg></button>
      <button class="ml-8" aria-label="Go to shell"><svg class="h-12 w-16" viewBox="0 0 64 48"><rect x="1" y="1" width="62" height="46" rx="9" fill="#fafafa" stroke="#b9b8bc" stroke-width="1.600"/><path d="m12 13 11 8-11 8M51 12l-11 9 11 9M23 35h17" fill="none" stroke="#757478" stroke-width="2.400"/></svg></button>
      <button class="ml-[90px]" aria-label="Search"><svg class="size-[34px]"><use href="#search"/></svg></button>
    </div>

    <div class="flex min-h-0 flex-1 [&_li]:flex [&_li]:h-11 [&_li]:items-center [&_li]:rounded-[10px] [&_li]:whitespace-nowrap [&_li>svg:first-child]:mr-3 [&_li>svg:first-child]:h-[30px] [&_li>svg:first-child]:w-7 [&_li>svg:first-child]:shrink-0 [&_li>i]:mr-3 [&_li>i]:h-[30px] [&_li>i]:w-7 [&_li>i]:shrink-0 [&_li>i]:border-[3px] [&_li>i]:border-white [&_li>i]:shadow-[0_0_2px_1px_rgb(0_0_0/.35)] [&_li>svg:last-child:not(:first-child)]:mr-3 [&_li>svg:last-child:not(:first-child)]:ml-auto [&_li>svg:last-child:not(:first-child)]:h-[14px] [&_li>svg:last-child:not(:first-child)]:w-2 [&_li>svg:last-child:not(:first-child)]:shrink-0 [&_li>svg:last-child:not(:first-child)]:text-[#8a8a8a]">
      <ul class="w-[146px] shrink-0 overflow-hidden border-r-2 border-[#e2e2e2] pt-[11px] pr-5 [&>li]:justify-end">
        <li class="rounded-l-none! bg-[#dcdcdc]"><span class="mr-auto -ml-1">s</span><svg><use href="#chev"/></svg></li>
        <li><span></span><svg><use href="#chev"/></svg></li>
        <li class="pr-11">odeproj</li>
        <li class="pr-11">kspace</li>
        <li></li>
        <li></li>
        <li><span></span><svg><use href="#chev"/></svg></li>
      </ul>
      <div class="w-[490px] shrink-0 overflow-hidden border-r-2 border-[#e2e2e2] px-5">
        <ul class="-mt-[27px] [&>li]:pl-3.5">
          <li><svg><use href="#doc"/></svg>Dog.dia</li>
          <li><svg><use href="#doc"/></svg>Dog.gcda</li>
          <li><svg><use href="#doc"/></svg>Dog.gcno</li>
          <li><svg><use href="#doc"/></svg>Dog.o</li>
          <li><svg viewBox="0 0 28 30"><path fill="#fff" stroke="#9c9c9c" stroke-width="1.200" d="M3 1h15.500L26 8v21H3z"/><path fill="#ddd" stroke="#b5b5b5" d="M18.500 1v7H26z"/><text x="14.500" y="25" text-anchor="middle" font-size="5" font-weight="700" fill="#555">SWIFT</text></svg>dummyInput-22.swift</li>
          <li class="bg-[#dcdcdc]"><svg><use href="#folder"/></svg>html<svg><use href="#chev"/></svg></li>
          <li><svg><use href="#doc"/></svg>main.d</li>
          <li><svg><use href="#doc"/></svg>main.dia</li>
          <li><svg><use href="#doc"/></svg>main.gcda</li>
          <li><svg><use href="#doc"/></svg>main.gcno</li>
          <li><svg><use href="#doc"/></svg>main.o</li>
          <li><svg><use href="#doc"/></svg>Person.d</li>
          <li><svg><use href="#doc"/></svg>Person.dia</li>
          <li><svg><use href="#doc"/></svg>Person.gcda</li>
          <li><svg><use href="#doc"/></svg>Person.gcno</li>
          <li><svg><use href="#doc"/></svg>Person.o</li>
          <li><svg><use href="#doc"/></svg>SceneDelegate.d</li>
          <li><svg><use href="#doc"/></svg>SceneDelegate.dia</li>
        </ul>
      </div>
      <ul class="w-[490px] shrink-0 overflow-hidden border-r-2 border-[#e2e2e2] px-5 pt-[11px] [&>li]:pl-3.5">
        <li><i class="bg-[#fddd5c]"></i>amber.png</li>
        <li><svg><use href="#folder"/></svg>Applications<svg><use href="#chev"/></svg></li>
        <li class="bg-[#dcdcdc]"><svg><use href="#folder"/></svg>CodeCoverageDemo<svg><use href="#chev"/></svg></li>
        <li><i class="bg-[#31ea5f]"></i>emerald.png</li>
        <li><svg><use href="#txt"/></svg>gcov.css</li>
        <li><i class="bg-white"></i>glass.png</li>
        <li><svg><use href="#txt"/></svg>index-sort-f.html</li>
        <li><svg><use href="#txt"/></svg>index-sort-l.html</li>
        <li><svg><use href="#txt"/></svg>index.html</li>
        <li><i class="bg-[#fd383a]"></i>ruby.png</li>
        <li><i class="bg-white"></i>snow.png</li>
        <li><i class="mr-[15px]! ml-[3px] w-[22px]! bg-white"></i>updown.png</li>
      </ul>
      <ul class="w-[490px] shrink-0 overflow-hidden border-r-2 border-[#e2e2e2] px-5 pt-[11px] [&>li]:pl-3.5">
        <li><svg><use href="#txt"/></svg>AppDelegate....nc-sort-c.html</li>
        <li><svg><use href="#txt"/></svg>AppDelegate.m.func.html</li>
        <li><svg><use href="#txt"/></svg>AppDelegate.m.gcov.html</li>
        <li><svg><use href="#txt"/></svg>Dog.m.func-sort-c.html</li>
        <li><svg><use href="#txt"/></svg>Dog.m.func.html</li>
        <li><svg><use href="#txt"/></svg>Dog.m.gcov.html</li>
        <li><svg><use href="#txt"/></svg>index-sort-f.html</li>
        <li><svg><use href="#txt"/></svg>index-sort-l.html</li>
        <li class="bg-[#1168de] text-white"><svg><use href="#txt"/></svg>index.html</li>
        <li><svg><use href="#txt"/></svg>main.m.func-sort-c.html</li>
        <li><svg><use href="#txt"/></svg>main.m.func.html</li>
        <li><svg><use href="#txt"/></svg>main.m.gcov.html</li>
        <li><svg><use href="#txt"/></svg>Person.m.func-sort-c.html</li>
        <li><svg><use href="#txt"/></svg>Person.m.func.html</li>
        <li><svg><use href="#txt"/></svg>Person.m.gcov.html</li>
        <li><svg><use href="#txt"/></svg>SceneDelegat...c-sort-c.html</li>
        <li><svg><use href="#txt"/></svg>SceneDelegate.m.func.html</li>
      </ul>

      <!-- Preview pane -->
      <div class="flex min-w-0 flex-1 flex-col">
        <div class="min-h-0 flex-1 overflow-hidden pt-5 pr-3.5 pl-5">
          <svg class="mx-auto h-[404px] w-[300px]" viewBox="0 0 300 404">
            <g class="drop-shadow-[0_6px_6px_rgb(0_0_0/.35)]"><path fill="url(#sheet)" d="M22 8h170c6 0 10 1 14 5l78 84c4 4 6 8 6 14v257a12 12 0 0 1-12 12H22a12 12 0 0 1-12-12V20A12 12 0 0 1 22 8z"/></g>
            <g font-family="Liberation Serif, serif" font-size="5" fill="#111"><text x="13" y="14">LCOV - code coverage report</text><text x="13" y="21">Current view:</text><text x="75" y="21">- CodeCoverageDemo</text><text x="13" y="27">Test:</text><text x="41" y="27">CodeCoverage.info</text><text x="13" y="33">Date:</text><text x="41" y="33">2024-05-03 19:59:22</text><text x="150" y="27">Lines:</text><text x="150" y="33">Functions:</text><text x="41" y="48">Filename</text><text x="146" y="48">Line Coverage</text><text x="174" y="54">80.0 %</text><text x="174" y="60">0.0 %</text><text x="174" y="65">68.8 %</text><text x="174" y="71">50.0 %</text><text x="174" y="77">100.0 %</text><text x="174" y="83">100.0 %</text><text x="13" y="94">Generated by:</text></g>
            <g font-family="Liberation Serif, serif" font-size="5" fill="#1c1cf0" text-decoration="underline"><text x="50" y="21">top level</text><text x="41" y="54">AppDelegate.m</text><text x="41" y="60">Dog.m</text><text x="41" y="65">Person.m</text><text x="41" y="71">SceneDelegate.m</text><text x="41" y="77">ViewController.m</text><text x="41" y="83">main.m</text><text x="45" y="94">LCOV version 1.16</text></g>
            <path fill="none" stroke="#bdbdbd" stroke-width=".7" d="M146 51h26v3h-26zM146 56.500h26v3h-26zM146 62h26v3h-26zM146 67.500h26v3h-26zM146 73h26v3h-26zM146 79h26v3h-26z"/>
            <g class="drop-shadow-[-4px_8px_8px_rgb(0_0_0/.4)]"><path fill="url(#curl)" d="M190 10c6 0 10 1 14 5l80 84c4 5 5 6 5 8h-89a10 10 0 0 1-10-10z"/></g>
            <text x="150" y="348" text-anchor="middle" font-size="52" font-weight="500" fill="#7f7f7f">HTML</text>
          </svg>
          <h3 class="mt-[46px] h-[43px] text-[30px] leading-[43px] font-medium">index.html</h3>
          <p class="h-[43px] leading-[43px] text-[#808080]">HTML document - 6 KB</p>
          <div class="flex h-[50px] items-center justify-between"><b class="font-semibold">Information</b><a href="#" class="text-[22px] text-[#1168de]">Show Less</a></div>
          <dl class="flex h-10 items-center justify-between text-[23px]"><dt class="text-[#808080]">Created</dt><dd>Today, 19:52</dd></dl>
        </div>
        <div class="flex h-[138px] shrink-0 flex-col items-center gap-[18px] border-t-2 border-[#e2e2e2] pt-8 pl-1 text-[22px] text-[#808080]"><svg class="size-7"><use href="#dots"/></svg><button>More...</button></div>
      </div>
    </div>
  </div>
</section>

<!-- Annotation arrows -->
<svg class="pointer-events-none absolute inset-0 size-full" fill="#fb2c1e" aria-hidden="true">
  <path d="M766 1198 1000 1139 1095 1117 1083 1100 1140 1121 1097 1162 1099 1144 1000 1165 769 1208c-8 0-9-8-3-10z"/>
  <path d="M1511 1142c-1-8 8-9 11-3l27 74 34 81c5 12 10 21 16 30l15-12-12 60-47-37 18-1c-6-25-13-52-22-82z"/>
</svg>
</body>
</html>
